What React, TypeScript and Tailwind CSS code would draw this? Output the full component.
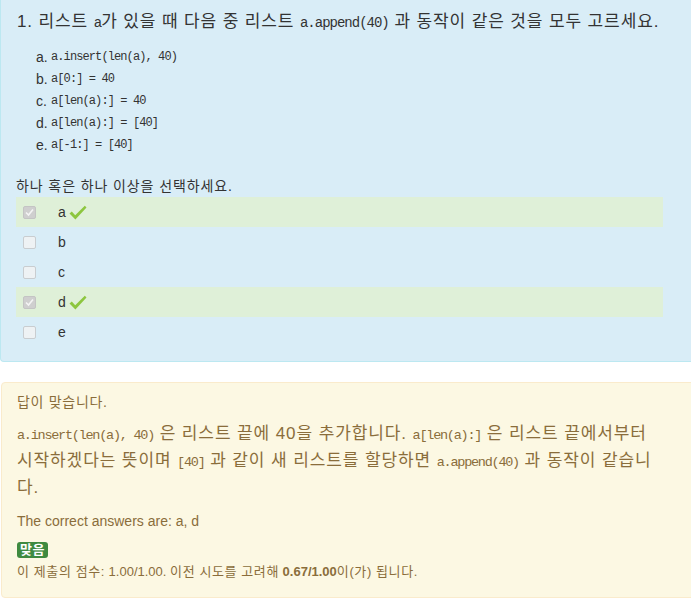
import React from "react";

const sans = { fontFamily: '"Liberation Sans", "Noto Sans CJK KR", sans-serif' };

function Code({ children, className = "" }: { children: React.ReactNode; className?: string }) {
  return (
    <code className={`font-['Liberation_Mono',monospace] leading-none ${className}`}>{children}</code>
  );
}

function Check() {
  return (
    <svg width="18" height="16" viewBox="0 0 18 16" className="inline-block ml-[3px] -mb-[1px]">
      <path d="M0.5 8.5 L2.8 6.6 L6.2 10.2 L15.8 0.8 L17.5 2.4 L6.4 14.6 Z" fill="#8dc63f" />
    </svg>
  );
}

function Box({ checked }: { checked: boolean }) {
  return (
    <span
      className={`inline-flex items-center justify-center w-[13px] h-[13px] rounded-[2px] border ${
        checked ? "bg-[#cfcfcf] border-[#c4c4c4]" : "bg-[#eef2f4] border-[#c9cdd0]"
      }`}
    >
      {checked && (
        <svg width="9" height="9" viewBox="0 0 9 9">
          <path d="M1 4.5 L3.5 7 L8 1.5" stroke="#f4f4f4" strokeWidth="1.6" fill="none" />
        </svg>
      )}
    </span>
  );
}

export default function App() {
  const opts = [
    { l: "a", c: "a.insert(len(a), 40)" },
    { l: "b", c: "a[0:] = 40" },
    { l: "c", c: "a[len(a):] = 40" },
    { l: "d", c: "a[len(a):] = [40]" },
    { l: "e", c: "a[-1:] = [40]" },
  ];
  const answers = [
    { l: "a", ok: true },
    { l: "b", ok: false },
    { l: "c", ok: false },
    { l: "d", ok: true },
    { l: "e", ok: false },
  ];
  return (
    <div className="w-[691px] h-[601px] overflow-hidden bg-white text-[#333]" style={sans}>
      <div className="w-[720px] h-[362px] bg-[#d9edf7] border-l border-b border-[#bce8f1] rounded-bl-[4px] pl-[15px] pt-[8px]">
        <div className="text-[17px] leading-[28px] pl-[1px] tracking-[0.88px] whitespace-nowrap">
          1. 리스트 <Code className="text-[14px] tracking-[-1px]">a</Code>가 있을 때 다음 중 리스트{" "}
          <Code className="text-[14px] tracking-[-1px]">a.append(40)</Code> 과 동작이 같은 것을 모두 고르세요.
        </div>
        <div className="pl-[20px] pt-[10px] flex flex-col">
          {opts.map((o) => (
            <div key={o.l} className="h-[22px] leading-[22px] text-[14px] flex items-center">
              <span className="w-[15px]">{o.l}.</span>
              <Code className="text-[12px] tracking-[-0.9px]">{o.c}</Code>
            </div>
          ))}
        </div>
        <div className="pt-[19px] text-[14px] leading-[22px] tracking-[0.9px]">하나 혹은 하나 이상을 선택하세요.</div>
        <div className="flex flex-col w-[647px]">
          {answers.map((a) => (
            <div
              key={a.l}
              className={`h-[30px] flex items-center pl-[7px] text-[14px] ${a.ok ? "bg-[#dff0d8]" : ""}`}
            >
              <Box checked={a.ok} />
              <span className="ml-[22px]">{a.l}</span>
              {a.ok && <Check />}
            </div>
          ))}
        </div>
      </div>
      <div className="mt-[20px] ml-[1px] w-[720px] h-[216px] bg-[#fcf8e3] border border-[#faebcc] rounded-[4px] pl-[15px] pt-[9px] text-[#8a6d3b]">
        <div className="text-[14px] leading-[20px] tracking-[0.7px]">답이 맞습니다.</div>
        <div className="pt-[8px] text-[17px] leading-[27px] tracking-[0.9px] whitespace-nowrap">
          <Code className="text-[13.5px] tracking-[-1.25px]">a.insert(len(a), 40)</Code> 은 리스트 끝에 40을 추가합니다.{" "}
          <Code className="text-[13.5px] tracking-[-1.25px]">a[len(a):]</Code> 은 리스트 끝에서부터
          <br />
          시작하겠다는 뜻이며 <Code className="text-[13.5px] tracking-[-1.25px]">[40]</Code> 과 같이 새 리스트를 할당하면{" "}
          <Code className="text-[13.5px] tracking-[-1.25px]">a.append(40)</Code> 과 동작이 같습니
          <br />
          다.
        </div>
        <div className="pt-[10px] text-[14px] leading-[20px]">The correct answers are: a, d</div>
        <div className="pt-[6px]">
          <span className="inline-block bg-[#3f8a3f] text-white text-[13px] font-bold leading-[16px] px-[3px] rounded-[3px] tracking-[0.5px]">
            맞음
          </span>
        </div>
        <div className="text-[13px] leading-[20px] pt-[1px]">
          <span className="tracking-[0.6px]">이 제출의 점수:</span> 1.00/1.00.{" "}
          <span className="tracking-[0.6px]">이전 시도를 고려해</span> <b>0.67/1.00</b>
          <span className="tracking-[0.6px]">이(가) 됩니다.</span>
        </div>
      </div>
    </div>
  );
}
